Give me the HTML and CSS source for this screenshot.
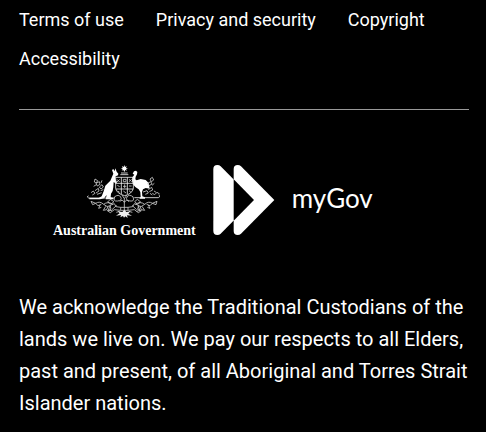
FILE: index.html
```html
<!DOCTYPE html>
<html lang="en">
<head>
<meta charset="utf-8">
<meta name="viewport" content="width=device-width, initial-scale=1">
<title>myGov</title>
<link rel="stylesheet" href="styles.css">
</head>
<body>
<footer class="footer">
  <nav class="links" aria-label="Footer">
    <a href="#">Terms of use</a>
    <a href="#">Privacy and security</a>
    <a href="#">Copyright</a>
    <a href="#">Accessibility</a>
  </nav>
  <div class="brand">
    <div class="government">
      <svg class="crest" viewBox="0 0 234 168" aria-hidden="true">
        <g fill="#fff">
          <path d="M118 6l2 6 5-3-2 6 6 1-6 2 3 5-5-2-3 6-3-6-5 2 3-5-6-2 6-1-2-6 5 3z"/>
          <path d="M85 32l-4-11 4-3 4 7 2-9 4 10 5 6-1 5-7 3-1 8 5 10-3 4-7-5-1 15-2 12-5 8-1 11 8 2v4H62l3-13-8 10-12 3H13v-4h28l9-5 6-15 5-17 15-15z"/>
          <path d="M143 32l4-7 6-2 4 4-1 7-4 7-1 8 4 3 12-4 15 3 9 9 3 17-12-2-8 4-3 8 1 13 8 3v4h-17l4-6-1-14-5-8-10-7-6-7-4-11 1-11 6-8z"/>
        </g>
        <g fill="none" stroke="#eee" stroke-width="2.5">
          <path d="M108 30h20M106 35h24M92 43h53v33q-4 17-26 22-24-6-27-22zM92 61h53M92 78h53M109 43v50M127 43v50"/>
          <path d="M10 98l-3 4 4 3h77M148 104h72l5-4-4-4"/>
        </g>
        <g fill="none" stroke="#ccc" stroke-width="2.5">
          <path d="M96 49l8 8M104 49l-8 8M115 49h8v7h-8zM132 49l8 7M132 56l8-7M97 67l7 4M114 70h10M119 64v11M132 69h8M98 84l6 4M115 84l8 6M132 83l6 5"/>
          <path d="M30 48l8 5-4 7-6-3zM33 61l10-5 2 8-8 5zM26 70l8-5M43 72l8-7 4 7-7 6zM30 83l10-7 2 8-9 6M18 89l7-5 5 7-8 5M47 83l8-3M36 94l14-5M51 52l-3 8"/>
          <path d="M195 48l7-5 4 8-7 5zM188 61l9-5 4 7-9 5zM201 67l7-6M190 80l10-7 3 8-10 5M207 84l8 5-6 6-7-4M174 87l12-4 4 7-9 4M195 91l7 5M216 88l8 5"/>
          <path d="M88 102q13-10 19 0t-9 12-9-12M145 102q-13-10-19 0t9 12 9-12M111 96l7 11 8-11M118 107v35M104 116q8-9 14 2 7-11 14-2M76 109l-8 8 10 6 9-7zM157 109l10 8-10 6-8-7z"/>
          <path d="M84 124q-16-10-28 0 10 11 21 4M56 124q-12-11-24-3l7 7 10-4M32 121l-14-6 5 10 9-4M45 126l-4 10 8-3M62 130l-7 12 10-2 4-10M74 130l-4 12 11 1M151 124q16-10 28 0-10 11-21 4M179 124q12-11 23-3l-7 7-10-4M202 121l14-6-3 10-11-4M190 126l5 10-8-3M171 130l8 12-10-2-4-10M160 131l5 11-10 3"/>
          <path d="M75 127l13-5 5 9 14 2v9l-19-2-12 9-9-6 11-4zM161 127l-13-5-5 9-14 2v9l19-2 12 9 9-6-11-4zM107 133h22M107 142h22M81 140l14-13M155 140l-14-13M94 148l10-3M132 145l10 3"/>
        </g>
        <path fill="#eee" d="M112 147l6-7 6 7 12-2-6 7 11 6-15-1 2 8-7-5-4 4-3-5-8 4 2-7-15 2 11-7-6-6z"/>
      </svg>
      <span class="government-name">Australian Government</span>
    </div>
    <svg class="mark" viewBox="0 0 186 210" aria-hidden="true">
      <g fill="#fff">
        <path d="M1 12Q1 0 13 0q6 0 10 4l40 40v122l-40 40q-4 4-10 4-12 0-12-12z"/>
        <path d="M62 12Q62 0 74 0q6 0 10 4l100 101L84 206q-4 4-10 4-12 0-12-12z"/>
      </g>
      <path fill="#000" d="M62 43v124l61-62z"/>
    </svg>
    <span class="wordmark">myGov</span>
  </div>
  <p class="acknowledgement">We acknowledge the Traditional Custodians of the lands we live on. We pay our respects to all Elders, past and present, of all Aboriginal and Torres Strait Islander nations.</p>
</footer>
</body>
</html>
```
FILE: styles.css
```css
body {
  margin: 0;
  background: #000;
  color: #fff;
  font-family: Roboto, sans-serif;
}

.footer {
  padding: 8px 17px 0 19px;
}

.links {
  display: flex;
  flex-wrap: wrap;
  gap: 15px 32px;
  padding-bottom: 38px;
  border-bottom: 1px solid #999;
  font-size: 18px;
  line-height: 24px;
}

.links a {
  color: inherit;
  text-decoration: none;
}

.brand {
  display: flex;
  align-items: flex-start;
  padding: 53px 0 0 34px;
}

.government {
  display: flex;
  flex-direction: column;
  align-items: center;
  gap: 2px;
}

.crest {
  width: 78px;
  height: 56px;
}

.government-name {
  font: bold 14px/20px "Liberation Serif", serif;
  white-space: nowrap;
}

.mark {
  width: 62px;
  height: 70px;
  margin: 2px 17px 0;
}

.wordmark {
  padding-top: 19px;
  font: 26px/32px Lato, sans-serif;
}

.acknowledgement {
  margin: 50px 0 0;
  font-size: 20px;
  line-height: 32px;
}
```
